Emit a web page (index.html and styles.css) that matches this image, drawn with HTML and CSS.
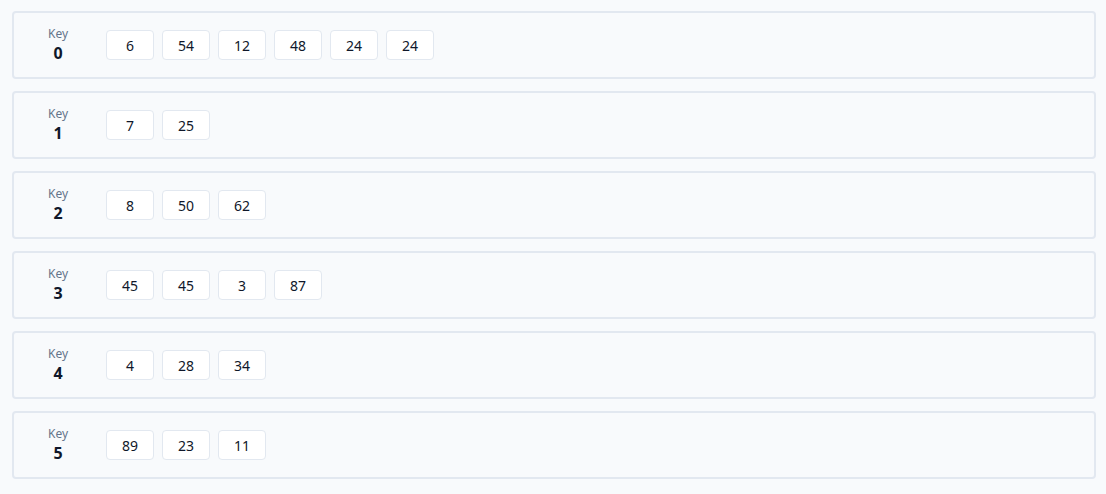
FILE: index.html
```html
<!DOCTYPE html>
<html>
<head>
<meta charset="utf-8">
<link rel="stylesheet" href="styles.css">
</head>
<body>
<div class="list">
  <div class="row">
    <div class="key"><span class="key-label">Key</span><span class="key-value">0</span></div>
    <div class="values">
      <div class="val">6</div><div class="val">54</div><div class="val">12</div><div class="val">48</div><div class="val">24</div><div class="val">24</div>
    </div>
  </div>
  <div class="row">
    <div class="key"><span class="key-label">Key</span><span class="key-value">1</span></div>
    <div class="values">
      <div class="val">7</div><div class="val">25</div>
    </div>
  </div>
  <div class="row">
    <div class="key"><span class="key-label">Key</span><span class="key-value">2</span></div>
    <div class="values">
      <div class="val">8</div><div class="val">50</div><div class="val">62</div>
    </div>
  </div>
  <div class="row">
    <div class="key"><span class="key-label">Key</span><span class="key-value">3</span></div>
    <div class="values">
      <div class="val">45</div><div class="val">45</div><div class="val">3</div><div class="val">87</div>
    </div>
  </div>
  <div class="row">
    <div class="key"><span class="key-label">Key</span><span class="key-value">4</span></div>
    <div class="values">
      <div class="val">4</div><div class="val">28</div><div class="val">34</div>
    </div>
  </div>
  <div class="row">
    <div class="key"><span class="key-label">Key</span><span class="key-value">5</span></div>
    <div class="values">
      <div class="val">89</div><div class="val">23</div><div class="val">11</div>
    </div>
  </div>
</div>
</body>
</html>
```
FILE: styles.css
```css
html, body {
  margin: 0;
  background: #f8fafc;
  font-family: "Noto Sans", "Open Sans", sans-serif;
}
.list {
  padding: 11px 10px 0 12px;
  display: flex;
  flex-direction: column;
  gap: 12px;
}
.row {
  height: 68px;
  box-sizing: border-box;
  border: 2px solid #e2e8f0;
  border-radius: 4px;
  background: #f8fafc;
  display: flex;
  align-items: center;
  padding: 0 16px;
  gap: 20px;
}
.key {
  width: 56px;
  display: flex;
  flex-direction: column;
  align-items: center;
}
.key-label {
  font-size: 12px;
  line-height: 16px;
  color: #64748b;
}
.key-value {
  font-size: 16px;
  line-height: 22px;
  font-weight: 700;
  color: #0f172a;
}
.values {
  display: flex;
  gap: 8px;
}
.val {
  width: 48px;
  height: 30px;
  box-sizing: border-box;
  border: 1px solid #e2e8f0;
  border-radius: 4px;
  background: #ffffff;
  display: flex;
  align-items: center;
  justify-content: center;
  font-size: 14px;
  color: #0f172a;
}
```
